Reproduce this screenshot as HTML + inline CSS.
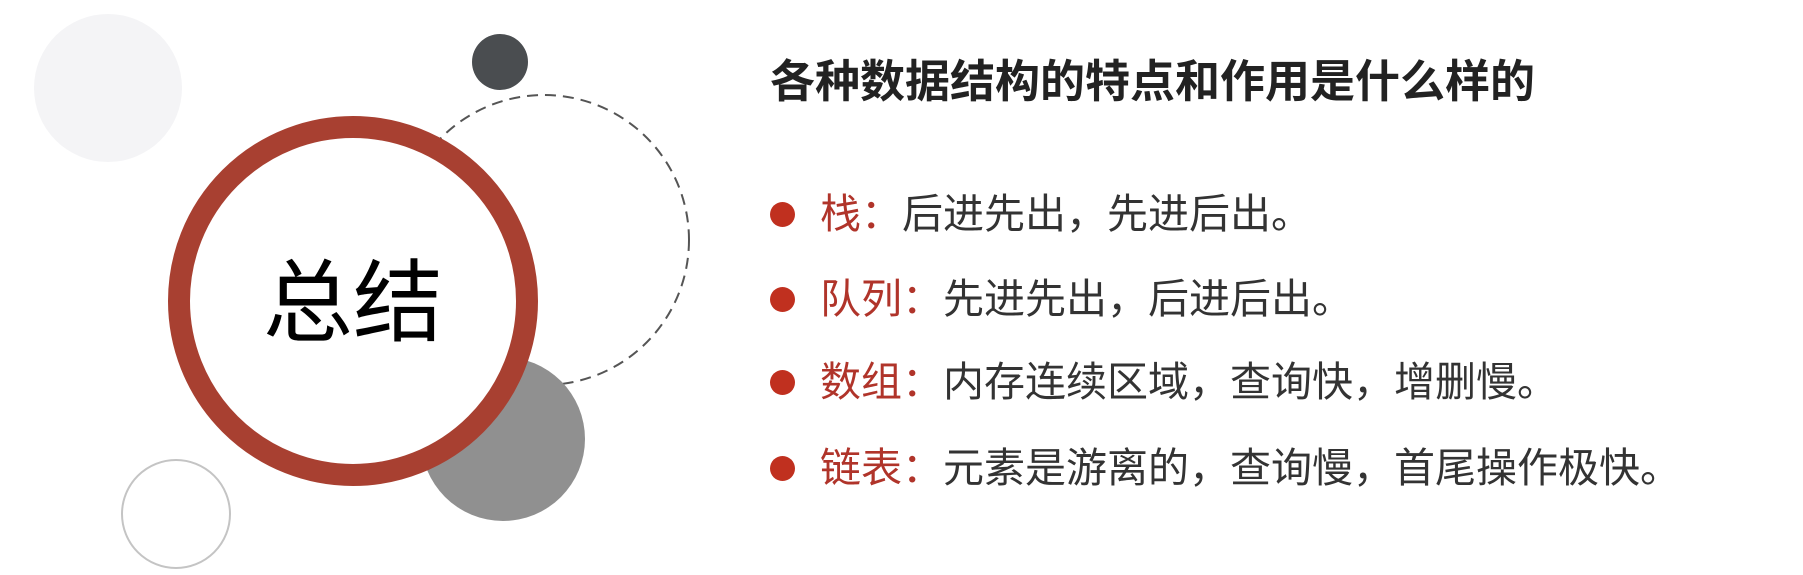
<!DOCTYPE html>
<html><head><meta charset="utf-8"><style>
html,body{margin:0;padding:0;background:#fff;}
body{width:1803px;height:575px;position:relative;overflow:hidden;font-family:"Liberation Sans","Noto Sans CJK SC",sans-serif;}
.t{position:absolute;left:770px;top:56px;font-size:45px;font-weight:bold;color:#222;white-space:nowrap;line-height:52px;}
.row{position:absolute;left:770px;font-size:41px;color:#333;white-space:nowrap;line-height:50px;}
.row .d{display:inline-block;width:25px;height:25px;border-radius:50%;background:#c0301f;vertical-align:middle;margin-right:25px;position:relative;top:-3px;}
.row b{font-weight:normal;color:#b0342a;}
</style></head><body>
<svg width="1803" height="575" style="position:absolute;left:0;top:0">
<circle cx="108" cy="88" r="74" fill="#f4f4f6"/>
<circle cx="500" cy="62" r="28" fill="#4a4d50"/>
<circle cx="544" cy="240" r="145" fill="none" stroke="#555" stroke-width="2" stroke-dasharray="11,7"/>
<circle cx="503" cy="439" r="82" fill="#909090"/>
<circle cx="176" cy="514" r="54" fill="none" stroke="#c4c4c4" stroke-width="2"/>
<circle cx="353" cy="301" r="174" fill="#fff" stroke="#a84031" stroke-width="22"/>
<text x="353" y="334" font-size="90" text-anchor="middle" fill="#000" font-family="Liberation Sans,Noto Sans CJK SC,sans-serif">总结</text>
</svg>
<div class="t">各种数据结构的特点和作用是什么样的</div>
<div class="row" style="top:189px"><span class="d"></span><b>栈：</b>后进先出，先进后出。</div>
<div class="row" style="top:274px"><span class="d"></span><b>队列：</b>先进先出，后进后出。</div>
<div class="row" style="top:357px"><span class="d"></span><b>数组：</b>内存连续区域，查询快，增删慢。</div>
<div class="row" style="top:443px"><span class="d"></span><b>链表：</b>元素是游离的，查询慢，首尾操作极快。</div>
</body></html>
